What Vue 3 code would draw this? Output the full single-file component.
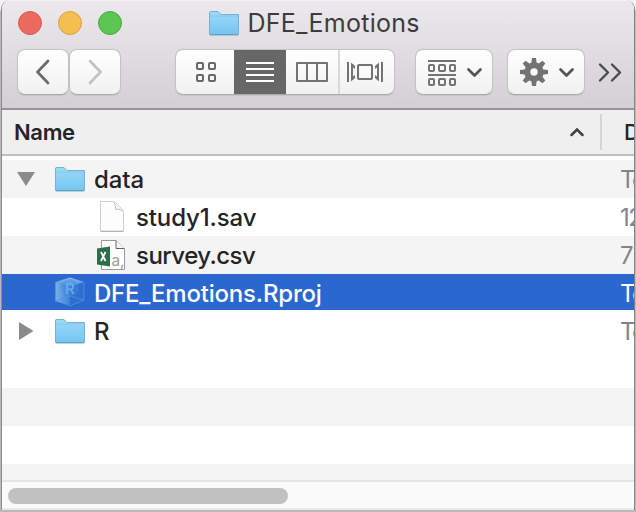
<script setup>
const rows = [
  { name: 'data', icon: 'folder', arrow: 'open', date: 'To', cls: 'shade' },
  { name: 'study1.sav', icon: 'doc', child: true, date: '12', cls: '' },
  { name: 'survey.csv', icon: 'csv', child: true, date: '7', cls: 'shade survey' },
  { name: 'DFE_Emotions.Rproj', icon: 'cube', date: 'To', cls: 'selected' },
  { name: 'R', icon: 'folder', arrow: 'closed', date: 'To', cls: '' },
  { cls: '' },
  { cls: 'shade' },
  { cls: '' },
  { cls: 'shade' }
]
</script>

<template>
  <div class="desktop">
    <div class="window">
      <header class="chrome">
        <div class="titlebar">
          <div class="lights"><i class="red"></i><i class="yellow"></i><i class="green"></i></div>
          <svg class="folder" width="32" height="26" viewBox="0 0 32 26"><use href="#folder" /></svg>
          <span class="title">DFE_Emotions</span>
        </div>
        <div class="toolbar">
          <button class="btn nav"><svg width="50" height="44"><path d="M30 11 19.500 22 30 33" fill="none" stroke="#6b6b6b" stroke-width="2.7" stroke-linecap="round" stroke-linejoin="round" /></svg></button>
          <button class="btn nav next"><svg width="50" height="44"><path d="M20 11 30.500 22 20 33" fill="none" stroke="#c3c2c3" stroke-width="2.7" stroke-linecap="round" stroke-linejoin="round" /></svg></button>
          <div class="btn segments">
            <span class="seg"><svg width="58" height="44"><g fill="none" stroke="#686868" stroke-width="2"><rect x="21" y="13" width="6" height="6" rx="1" /><rect x="33" y="13" width="6" height="6" rx="1" /><rect x="21" y="25" width="6" height="6" rx="1" /><rect x="33" y="25" width="6" height="6" rx="1" /></g></svg></span>
            <span class="seg active"><svg width="52" height="46"><path d="M12 14h28M12 20h28M12 26h28M12 32h28" stroke="#fff" stroke-width="2" /></svg></span>
            <span class="seg"><svg width="52" height="44"><path d="M11 13h30v18H11zM21 13v18M31 13v18" fill="none" stroke="#737373" stroke-width="2" stroke-linejoin="round" /></svg></span>
            <span class="seg last"><svg width="54" height="44"><rect x="18" y="15" width="14" height="14" rx="1" fill="none" stroke="#737373" stroke-width="2" /><path d="M8 12v20M42 12v20" stroke="#737373" stroke-width="2" /><path d="M11 12.500l4 3.500v3l-2-1.500v9l2-1.500v3l-4 3.500zM39 12.500l-4 3.500v3l2-1.500v9l-2-1.500v3l4 3.500z" fill="#737373" /></svg></span>
          </div>
          <button class="btn group"><svg width="76" height="44"><path d="M12 11h28M12 25h28" stroke="#737373" stroke-width="2" /><g fill="none" stroke="#737373" stroke-width="2"><rect x="13" y="15" width="5" height="6" rx="1" /><rect x="23" y="15" width="6" height="6" rx="1" /><rect x="34" y="15" width="5" height="6" rx="1" /><rect x="13" y="29" width="5" height="6" rx="1" /><rect x="23" y="29" width="6" height="6" rx="1" /><rect x="34" y="29" width="5" height="6" rx="1" /></g><path d="m52.500 19.500 6 6 6-6" class="chev" /></svg></button>
          <button class="btn gear"><svg width="76" height="44"><g transform="translate(26 22)"><circle r="6.700" fill="none" stroke="#737373" stroke-width="6" /><g fill="#737373"><path v-for="n in 8" :key="n" :transform="`rotate(${n * 45})`" d="M-2-14h4l.8 6h-5.600z" /></g></g><path d="m52.500 19.500 6 6 6-6" class="chev" /></svg></button>
          <svg class="more" width="24" height="24"><path d="m2 4.500 8 8-8 8M14 4.500l8 8-8 8" fill="none" stroke="#4b4b4d" stroke-width="2.400" stroke-linecap="round" stroke-linejoin="round" /></svg>
        </div>
      </header>
      <div class="columns">
        <span class="name">Name</span>
        <svg class="sort" width="14" height="10"><path d="m1.500 8 5.500-5.500L12.500 8" fill="none" stroke="#424242" stroke-width="2.500" stroke-linecap="round" /></svg>
        <span class="date-head">D</span>
      </div>
      <main class="list">
        <div v-for="(r, i) in rows" :key="i" class="row" :class="r.cls">
          <span class="disclose">
            <svg v-if="r.arrow" width="18" height="18"><path :d="r.arrow === 'open' ? 'M0 2h18L9 16z' : 'M2 0v18L16.500 9z'" fill="#8b8b8b" /></svg>
          </span>
          <span v-if="r.icon" class="icon" :class="{ child: r.child }">
            <svg v-if="r.icon === 'folder'" width="32" height="26" viewBox="0 0 32 26"><use href="#folder" /></svg>
            <svg v-else-if="r.icon === 'doc'" width="32" height="34"><path d="M4.500 1.500h13Q20 2 27.500 11v20h-23z" fill="#fdfdfd" stroke="#cfcfcf" /><path d="M17.500 1.500Q20 5 19.500 9.500 24 8.500 27.500 11.500" fill="#f3f3f3" stroke="#c6c6c6" /><path d="M4.500 31.500h23" stroke="#b3b3b3" /></svg>
            <svg v-else-if="r.icon === 'csv'" width="32" height="34"><path d="M5.500 2.500H20l8.500 8.500v20.500h-23z" fill="#fff" stroke="#999" /><path d="M20 2.500V10.500h8.500" fill="#f5f5f5" stroke="#666" /><path d="M1 10.500l13-2v20L1 26.500z" fill="#2c7048" /><path d="m5 14 4.500 9M9.500 14 5 23" stroke="#fff" stroke-width="1.800" /><text x="15.500" y="27.500" font-size="15" fill="#a3a3a3">a,</text></svg>
            <svg v-else width="32" height="32"><path d="M1.500 6 16 1.500l14 4.500v18l-14 6-14.500-5z" fill="#3f7fd8" /><path d="M1.500 6 16 1.500 30 6l-14 5z" fill="url(#top)" /><path d="M1.500 6l14.500 5v19L1.500 25z" fill="url(#side)" /><path d="M16 11l14-5v18l-14 6z" fill="#2d6fd1" /><path d="M30 6v18l-14 6M1.500 25 16 20l14 4" fill="none" stroke="#4f90dd" stroke-width=".8" /><circle cx="16" cy="12" r="9" fill="#4789dc" opacity=".4" /><text x="11" y="17.500" font-size="15" fill="#5fb0f2">R</text></svg>
          </span>
          <span class="label">{{ r.name }}</span>
          <span class="date">{{ r.date }}</span>
        </div>
      </main>
      <footer class="scroll"><div class="thumb"></div></footer>
    </div>
    <svg class="defs" width="0" height="0">
      <defs>
        <linearGradient id="blue" x2="0" y2="1"><stop stop-color="#9bdaf9" /><stop offset="1" stop-color="#75c4f1" /></linearGradient>
        <linearGradient id="side"><stop stop-color="#78b2e8" /><stop offset="1" stop-color="#3c7fd7" /></linearGradient>
        <linearGradient id="top" x2="0" y2="1"><stop stop-color="#8abcec" /><stop offset="1" stop-color="#4a8bdd" /></linearGradient>
        <g id="folder"><path d="M1.500 24V2.500q0-1 1-1H10l3 3h17.500V24q0 1-1 1h-27q-1 0-1-1z" fill="url(#blue)" stroke="#72b2d5" /><path d="M2 6h28" stroke="#88c8e8" /><path d="M2 24.500h28" stroke="#659fc0" /></g>
      </defs>
    </svg>
  </div>
</template>

<style>
body { margin: 0; overflow: hidden; }
</style>

<style scoped>
.desktop { width: 636px; height: 512px; box-sizing: border-box; background: #b9b9b9; background: linear-gradient(#f3f3f3 0 9px, #b9b9b9 12px); font-family: Inter, "Liberation Sans", sans-serif; overflow: hidden; }
.window { width: 634px; height: 510px; box-sizing: border-box; margin-left: 1px; border-left: 1px solid #8c8c8e; border-right: 1px solid #858587; border-radius: 9px 9px 0 0; overflow: hidden; background: #fff; }
.chrome { height: 110px; box-sizing: border-box; background: linear-gradient(#ebe9eb, #d2d0d2); border-bottom: 2px solid #969496; border-top: 1px solid #f5f4f5; }
.titlebar { height: 48px; box-sizing: border-box; display: flex; align-items: center; padding: 0 0 5px 16px; }
.lights { display: flex; gap: 16px; margin-right: 84px; }
.lights i { width: 24px; height: 24px; box-sizing: border-box; border-radius: 50%; border: 1px solid; }
.lights .red { background: #ec695f; border-color: #dc584f; }
.lights .yellow { background: #f5bf4f; border-color: #df9f3a; }
.lights .green { background: #5dc553; border-color: #48aa40; }
.folder { margin-left: 2px; }
.title { margin-left: 7.500px; font-size: 25px; line-height: 30px; letter-spacing: .25px; font-weight: 430; color: #3d3b3e; }
.toolbar { display: flex; align-items: center; height: 46px; padding-left: 15px; }
.btn { box-sizing: border-box; height: 46px; padding: 0; border: 1px solid #c4c2c4; border-bottom-color: #aaa8aa; border-radius: 8px; background: linear-gradient(#fff, #f1f1f1); display: flex; overflow: hidden; flex: none; box-shadow: 0 1px 1px #0001; }
.btn svg { display: block; flex: none; }
.nav { width: 52px; }
.segments { width: 220px; margin-left: 54px; }
.seg { width: 52px; height: 44px; flex: none; }
.seg:first-child { width: 58px; }
.seg.active { background: #676767; height: 46px; margin-top: -1px; }
.seg.last { border-left: 2px solid #dad9da; width: 54px; }
.group { width: 78px; margin-left: 20px; }
.gear { width: 78px; margin-left: 14px; }
.chev { fill: none; stroke: #555; stroke-width: 2.7; stroke-linecap: round; stroke-linejoin: round; }
.more { margin-left: 13px; flex: none; }
.columns { height: 46px; box-sizing: border-box; background: #efefef; border-bottom: 2px solid #bfbfbf; display: flex; align-items: center; padding-left: 12px; white-space: nowrap; }
.name { font-size: 22px; font-weight: 600; letter-spacing: -.35px; color: #252525; width: 556px; flex: none; }
.sort { flex: none; }
.date-head { flex: none; margin-left: 16px; padding-left: 22px; height: 36px; line-height: 36px; border-left: 2px solid #d5d5d5; font-size: 22px; font-weight: 450; color: #252525; }
.list { height: 324px; padding-top: 4px; box-sizing: border-box; overflow: hidden; }
.row { position: relative; height: 38px; display: flex; align-items: center; white-space: nowrap; font-size: 24px; font-weight: 450; letter-spacing: -.12px; color: #242424; }
.shade { background: #f4f4f4; }
.survey .label { letter-spacing: -.55px; }
.selected { background: #2a67d1; color: #fff; height: 36px; margin-bottom: 2px; letter-spacing: -.2px; }
.selected .label, .selected .date { padding-top: 2px; }
.disclose { width: 18px; height: 18px; margin-left: 15px; flex: none; display: flex; }
.icon { width: 32px; margin-left: 19px; flex: none; display: flex; }
.icon.child { margin-left: 61px; }
.label { margin-left: 8px; flex: none; }
.date { position: absolute; left: 618px; font-weight: 400; letter-spacing: -1.500px; color: #858585; }
.selected .date { color: #fff; }
.scroll { height: 30px; box-sizing: border-box; background: #fafafa; border-top: 2px solid #e4e4e4; border-bottom: 2px solid #e9e9e9; padding: 6px; }
.thumb { width: 280px; height: 16px; border-radius: 8px; background: #c1c1c1; }
.defs { display: block; }
</style>
